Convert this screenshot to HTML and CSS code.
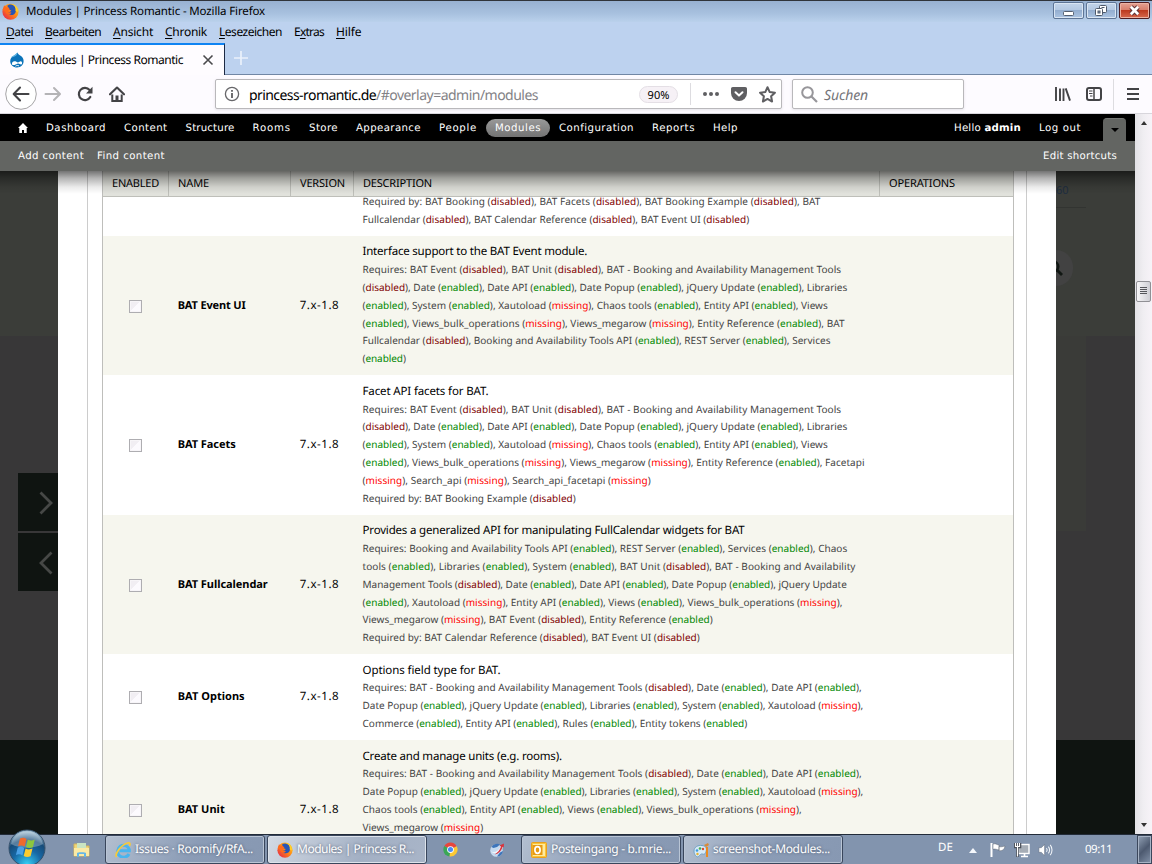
FILE: index.html
```html
<!DOCTYPE html>
<html lang="de">
<head>
<meta charset="utf-8">
<title>Modules | Princess Romantic</title>
<link rel="stylesheet" href="styles.css">
</head>
<body>
<svg width="0" height="0" class="defs">
  <defs>
    <linearGradient id="fox" x1="1" y1="0" x2="0" y2="1"><stop offset="0" stop-color="#ffe226"/><stop offset=".45" stop-color="#ff8a16"/><stop offset="1" stop-color="#e3184f"/></linearGradient>
    <radialGradient id="orb" cx=".5" cy=".95" r=".9"><stop offset="0" stop-color="#35d0f5"/><stop offset=".45" stop-color="#1768a5"/><stop offset=".75" stop-color="#174b78"/><stop offset="1" stop-color="#9fbdd0"/></radialGradient>
    <symbol id="firefox" viewBox="0 0 16 16">
      <circle cx="8" cy="8.200" r="7.600" fill="url(#fox)"/>
      <path d="M5 2.600C7 .8 11 1 12.600 4.200c1 2.200.6 5-1.200 6.300-2.200 1.500-5.600.8-6.200-1.500l2.200-.6 1.400-1.400-2.300-.8z" fill="#2755b5"/>
      <path d="M.6 6.500 2 2.200l1.600 1.700 2.300.2 1.500 1.700-1.700 1.400.3 1.500 3 .3-1.400 1.500c-2 .9-4.600-.8-4.700-2.900z" fill="#ff6a1c"/>
      <path d="M9 1.200c3 1 4.200 3 3.700 6.300l2.300 1C15.200 4.500 12.500 1.500 9 1.200z" fill="#ffd02a"/>
    </symbol>
  </defs>
</svg>
<div class="window">
  <header class="titlebar">
    <svg class="app" viewBox="0 0 16 16"><use href="#firefox"/></svg>
    <span data-w="239">Modules | Princess Romantic - Mozilla Firefox</span>
    <div class="winbtns">
      <button class="wb"><svg viewBox="0 0 31 17"><rect x="10.500" y="9.500" width="10" height="4" rx="1" fill="#fff" stroke="#555f70"/></svg></button>
      <button class="wb"><svg viewBox="0 0 31 17"><g fill="#fff" stroke="#4e5869"><rect x="13.500" y="3.500" width="7" height="7" rx="1"/><rect x="9.500" y="6.500" width="7" height="7" rx="1"/><rect x="12" y="9" width="2" height="2" fill="#8fa5c4"/><path d="M15.500 5.500h3"/></g></svg></button>
      <button class="wb close"><svg viewBox="0 0 31 17"><path d="M12 5l7 7M19 5l-7 7" stroke="#5d3034" stroke-width="4.600"/><path d="M11.800 4.800l7.400 7.400M19.200 4.800l-7.400 7.400" stroke="#fff" stroke-width="2.700"/></svg></button>
    </div>
  </header>
  <nav class="menubar">
    <span data-w="27"><u>D</u>atei</span><span data-w="56"><u>B</u>earbeiten</span><span data-w="40"><u>A</u>nsicht</span><span data-w="42"><u>C</u>hronik</span><span data-w="63"><u>L</u>esezeichen</span><span data-w="30">E<u>x</u>tras</span><span data-w="25.5"><u>H</u>ilfe</span>
  </nav>
  <div class="tabs">
    <div class="tab">
      <svg class="drop" viewBox="0 0 16 16"><path d="M8.300.5c.7 1.700 2 2.200 3.700 3.500 1.700 1.200 2.600 2.900 2.600 5.100 0 3.900-3 6.400-6.600 6.400S1.200 12.800 1.200 9.200c0-3 1.700-4.200 3.700-5.500C6.600 2.700 7.700 2 8.300.5z" fill="#0b73b9"/><path d="M1.800 5.500C3 4 6 3.400 8.300.5c.3 2.500-1.600 4.500-6.500 5z" fill="#5bb1e0"/><path d="M3 12.200c-.3-2 1.300-3.300 3.200-2.900 1.200.3 2 1.200 2.700 1.200s1.700-1.400 3-1.300c1.400.1 1.700 2.700.5 3.300-1 .5-2-.8-3.200-.9-1.400-.1-1.900 1.200-3.600 1.400-1.200.1-2.300.1-2.600-.8z" fill="#fff"/><path d="M6.500 14.200c1-.9 2.600-.9 3.500-.2" stroke="#fff" fill="none"/></svg>
      <span class="tabname" data-w="152">Modules | Princess Romantic</span>
      <svg class="x" viewBox="0 0 12 12"><path d="M1.500 1.500l9 9M10.500 1.500l-9 9" stroke="#4a4a4d" stroke-width="1.600"/></svg>
    </div>
    <svg class="plus" viewBox="0 0 14 14"><path d="M7 0v14M0 7h14" stroke="#eaf1fb" stroke-width="1.700"/></svg>
  </div>
  <div class="navbar">
    <span class="back"><svg viewBox="0 0 32 32"><circle cx="16" cy="16" r="15.300" fill="#fff" stroke="#a5a4a6"/><path d="M23.500 16H9M15 9.500L8.700 16l6.300 6.500" fill="none" stroke="#434346" stroke-width="2.100" stroke-linecap="round" stroke-linejoin="round"/></svg></span>
    <svg class="fwd" viewBox="0 0 18 16"><path d="M1.500 8h14M10 2l6 6-6 6" fill="none" stroke="#b4b3b6" stroke-width="2" stroke-linecap="round" stroke-linejoin="round"/></svg>
    <svg class="reload" viewBox="0 0 16 16"><path d="M13.300 11A6.100 6.100 0 1 1 12.600 4" fill="none" stroke="#434346" stroke-width="2.200" stroke-linecap="round"/><path d="M15.500.8v6.700H9z" fill="#434346"/></svg>
    <svg class="home" viewBox="0 0 16 16"><path d="M1 8.300L8 1.500l7 6.800" fill="none" stroke="#434346" stroke-width="2.100" stroke-linecap="round" stroke-linejoin="round"/><path d="M3.300 8.500V15h9.400V8.500" fill="none" stroke="#434346" stroke-width="2"/><path d="M6.500 15V9.500h3V15z" fill="#434346"/></svg>
    <div class="url">
      <svg class="info" viewBox="0 0 16 16"><circle cx="8" cy="8" r="6.600" fill="none" stroke="#67676a" stroke-width="1.300"/><path d="M8 7v5M8 4v1.800" stroke="#555558" stroke-width="1.700"/></svg>
      <span class="host" data-w="127">princess-romantic.de</span><span class="path" data-w="162">/#overlay=admin/modules</span>
      <span class="zoom"><span data-w="22">90%</span></span>
      <i class="usep"></i>
      <svg class="dots" viewBox="0 0 16 6"><g fill="#5f5f62"><circle cx="2" cy="3" r="2"/><circle cx="8" cy="3" r="2"/><circle cx="14" cy="3" r="2"/></g></svg>
      <svg class="pocket" viewBox="0 0 16 14"><path d="M1.800 0h12.400C15.300 0 16 .8 16 1.800V6a8 8 0 0 1-16 0V1.800C0 .8.700 0 1.800 0z" fill="#5f5f62"/><path d="M4.500 5.300L8 8.600l3.500-3.300" fill="none" stroke="#fff" stroke-width="2" stroke-linecap="round" stroke-linejoin="round"/></svg>
      <svg class="star" viewBox="0 0 16 16"><path d="M8 1.200l2.100 4.500 4.900.6-3.600 3.400.9 4.900L8 12.200l-4.300 2.400.9-4.900L1 6.300l4.900-.6z" fill="none" stroke="#5f5f62" stroke-width="1.900" stroke-linejoin="round"/></svg>
    </div>
    <div class="search">
      <svg viewBox="0 0 17 17"><circle cx="6.500" cy="6.500" r="5.300" fill="none" stroke="#97969a" stroke-width="2"/><path d="M10.500 10.500l5.500 5.500" stroke="#97969a" stroke-width="2.200"/></svg>
      <span data-w="44">Suchen</span>
    </div>
    <svg class="lib" viewBox="0 0 16 14"><path d="M1 0v14M5 1.500V14M8.500 1.500V14M10.700 1.400L15 13.600" stroke="#434346" stroke-width="1.900" fill="none"/></svg>
    <svg class="side" viewBox="0 0 16 14"><rect x="1" y="1" width="14" height="12" rx="2" fill="none" stroke="#434346" stroke-width="2"/><path d="M8 1v12" stroke="#434346" stroke-width="1.500"/><path d="M3 4h3.500M3 6.500h3.500M4 9h2.500" stroke="#434346"/></svg>
    <i class="nsep"></i>
    <svg class="burger" viewBox="0 0 12 12"><path d="M0 1h12M0 6h12M0 11h12" stroke="#434346" stroke-width="2"/></svg>
  </div>

  <div class="viewport">
    <div class="page">
      <div class="toolbar">
        <svg class="thome" viewBox="0 0 10 10"><path d="M5 0l5 5H8.700v5H6V7H4v3H1.300V5H0z" fill="#fff"/></svg>
        <a><span data-w="60">Dashboard</span></a><a><span data-w="43.5">Content</span></a><a><span data-w="49">Structure</span></a><a><span data-w="38.5">Rooms</span></a><a><span data-w="29">Store</span></a><a><span data-w="65">Appearance</span></a><a><span data-w="38">People</span></a><a class="active"><span data-w="46">Modules</span></a><a><span data-w="75">Configuration</span></a><a><span data-w="43">Reports</span></a><a><span data-w="25">Help</span></a>
        <div class="user"><a><span data-w="67">Hello <b>admin</b></span></a><a><span data-w="42">Log out</span></a><span class="toggle"><i></i></span></div>
      </div>
      <div class="shortcuts"><span data-w="66">Add content</span><span data-w="68">Find content</span><span class="edit" data-w="74">Edit shortcuts</span></div>
      <div class="main">
        <aside class="left">
          <div class="g1"></div><div class="g2">
            <span class="arrow"><svg viewBox="0 0 14 24"><path d="M1.500 1.500L12 12 1.500 22.500" fill="none" stroke="#464846" stroke-width="2.800"/></svg></span>
            <span class="arrow"><svg viewBox="0 0 14 24"><path d="M12.500 1.500L2 12l10.500 10.500" fill="none" stroke="#464846" stroke-width="2.800"/></svg></span>
          </div><div class="g3"></div>
        </aside>
        <section class="overlay">
          <div class="frame">
            <div class="table">
              <div class="row head"><span><em data-w="47">ENABLED</em></span><span><em data-w="31">NAME</em></span><span><em data-w="45">VERSION</em></span><span><em data-w="69">DESCRIPTION</em></span><span><em data-w="66">OPERATIONS</em></span></div>
              <div class="body" id="modules"></div>
            </div>
          </div>
        </section>
        <aside class="right">
          <div class="r1"><span class="num">60</span><i class="rule"></i><span class="lens"><svg viewBox="0 0 16 16"><circle cx="6.500" cy="6.500" r="4.800" fill="none" stroke="#111713" stroke-width="2.400"/><path d="M10 10l5 5" stroke="#111713" stroke-width="2.800"/></svg></span></div>
          <div class="r2"><i></i></div><div class="g3"></div>
        </aside>
        <div class="shade"></div>
      </div>
    </div>
    <div class="scroll"><i class="up"></i><span class="thumb"><i></i><i></i><i></i><i></i></span><i class="down"></i></div>
  </div>

  <footer class="taskbar">
    <svg class="orb" viewBox="0 0 38 38"><circle cx="19" cy="19" r="18" fill="url(#orb)" stroke="#35506a"/><path d="M3 15a16.500 16.500 0 0 1 32 0c-9 5-23 5-32 0z" fill="#fff" opacity=".28"/><path d="M12 9.500c2.500-1.300 4.500-.9 6.500.4l-1.800 7.600c-2-1.200-4-1.500-6.600-.4z" fill="#ee6a2c"/><path d="M19.800 10.500c2.200 1.200 4.200 1.300 7 0l-1.900 7.700c-2.600 1.100-4.700.9-6.900-.2z" fill="#8cc63f"/><path d="M9.800 18.500c2.600-1.100 4.500-.7 6.500.4l-1.900 7.500c-2-1.200-3.900-1.400-6.500-.4z" fill="#4aa0e6"/><path d="M17.600 19.500c2.200 1.200 4.300 1.200 6.900.1l-1.900 7.600c-2.600 1.100-4.700.9-6.900-.2z" fill="#fccb2f"/></svg>
    <svg class="folder" viewBox="0 0 17 16"><path d="M1 2h6l1.500 2H16v10H1z" fill="#f0d678" stroke="#d3b55c"/><path d="M4 1h9v5H4z" fill="#c9e4c2"/><path d="M1 6h15v8H1z" fill="#fbeaa4"/><path d="M4 15v-4c0-1 9-1 9 0v4h-2v-3H6v3z" fill="#65b7e6"/></svg>
    <div class="task"><svg viewBox="0 0 16 16"><path d="M14 12a6 6 0 1 1 .3-4.600v1.300H4.500" fill="none" stroke="#49b5ee" stroke-width="3"/><path d="M1.500 15C-.5 12 6 3 12.500 1c2.500-.7 3 .8 2 3" fill="none" stroke="#f7c93a" stroke-width="1.700"/></svg><span data-w="118">Issues · Roomify/RfA...</span></div>
    <div class="task on"><svg viewBox="0 0 16 16"><use href="#firefox"/></svg><span data-w="117">Modules | Princess R...</span></div>
    <svg class="chrome" viewBox="0 0 16 16"><path d="M8 8L1.400 4.200A7.500 7.500 0 0 1 14.600 4.500z" fill="#e8453c"/><path d="M8 8L1.400 4.200A7.500 7.500 0 0 0 7 15.500z" fill="#3aa757"/><path d="M8 8l6.600-3.500A7.500 7.500 0 0 1 7 15.500z" fill="#fcc934"/><circle cx="8" cy="8" r="3.600" fill="#fff"/><circle cx="8" cy="8" r="2.700" fill="#4a8af4"/></svg>
    <svg class="globe" viewBox="0 0 16 16"><circle cx="7.500" cy="8.500" r="6.300" fill="#c4daf0"/><path d="M2.500 5c2-3 6-4 8.500-2.500l-3 2.500-3.500 1zM8 14.500c3 0 5.500-2 6-5.500l-3 1.500z" fill="#3d75bb"/><path d="M1 8.500c3 3 8 2 11.500-5L14 5C12 11 5 13.500 1 8.500z" fill="#f3f6fb"/><path d="M5.500 12.500c3-1.500 5.500-4.500 6.500-8L10.500 3.500l4.500-2-.3 4-1-.8c-1.400 4.500-4 7-8.200 7.800z" fill="#d8343d"/></svg>
    <div class="task mail"><svg viewBox="0 0 16 16"><rect x=".5" y=".5" width="15" height="15" rx="1" fill="#fbc53a" stroke="#e9a01c"/><rect x="2" y="2" width="12" height="12" fill="#ffeb9c"/><rect x="1.500" y="3" width="10" height="10" fill="#e79a12"/><ellipse cx="6.500" cy="8" rx="2.600" ry="3.300" fill="none" stroke="#fff" stroke-width="1.700"/></svg><span data-w="120">Posteingang - b.mrie...</span></div>
    <div class="task"><svg viewBox="0 0 16 16"><path d="M1 9c0-4 4-6 8-5.500s5 3 4 6-2 3-3.500 2.500S7 13 5.500 14.500 1 13 1 9z" fill="#d7eaf6" stroke="#6fa0c4"/><circle cx="4" cy="8.500" r="1.300" fill="#3f9de0"/><circle cx="7" cy="6.500" r="1.300" fill="#4bae4f"/><circle cx="10" cy="7" r="1.200" fill="#d84a3a"/><circle cx="4.500" cy="12" r="1.200" fill="#e7b22f"/><path d="M14 5v10" stroke="#ea8b1e" stroke-width="2"/><path d="M11 3l4-2 1 2-3 2z" fill="#d78a3a"/></svg><span data-w="117">screenshot-Modules...</span></div>
    <div class="tray">
      <span class="de" data-w="15">DE</span>
      <i class="tri"></i>
      <svg class="flag" viewBox="0 0 16 16"><path d="M1.500 1v14" stroke="#fff" stroke-width="2"/><path d="M3 2c3-1 4 1 6 1v5c-2 0-3-1.500-6-.7zM9 4.500c2 .7 4 0 6-.5-.5 3-2 5-6 4.700z" fill="#fff" stroke="#5c6470" stroke-width=".5"/></svg>
      <svg class="net" viewBox="0 0 16 16"><rect x="4.500" y="2.500" width="10.500" height="9" fill="#a6adb6" stroke="#fff" stroke-width="1.400"/><path d="M7 14.500h7M10.500 12v2" stroke="#fff" stroke-width="1.600"/><path d="M1 1v4h5V1M3.500 1v14" fill="none" stroke="#4a4f58" stroke-width="2.600"/><path d="M1.500 1v3.500h4V1M3.500 1v13.500" fill="none" stroke="#fff" stroke-width="1.100"/></svg>
      <svg class="vol" viewBox="0 0 16 16"><path d="M1 5.500h2.500L7 2v12l-3.500-3.500H1z" fill="#fff" stroke="#606a78" stroke-width=".5"/><path d="M9 6c1 1.200 1 2.800 0 4M11 4.300c1.800 2 1.800 5.400 0 7.400M13 2.500c2.600 3 2.600 8 0 11" fill="none" stroke="#f3f6fa" stroke-width="1.100"/></svg>
      <span class="clock" data-w="27">09:11</span>
      <i class="peek"></i>
    </div>
  </footer>
</div>
<script src="script.js"></script>
</body>
</html>
```
FILE: styles.css
```css
* { box-sizing: border-box; }
body { margin: 0; font-family: "Noto Sans", "Open Sans", sans-serif; font-size: 12px; color: #000; text-rendering: geometricPrecision; }
svg { display: block; flex: none; }
.defs { position: absolute; }
span, em { white-space: nowrap; font-style: normal; }
i { display: block; flex: none; }
.window { width: 1152px; height: 864px; overflow: hidden; display: flex; flex-direction: column; background: #bdd2ef; }

.titlebar { height: 22px; flex: none; display: flex; align-items: center; border-top: 1px solid #30343a; background: linear-gradient(#98b1d1, #a8c1df 60%, #bad1ec); padding: 0 2px; font-size: 11.5px; }
.titlebar .app { width: 17px; height: 17px; margin-right: 7px; }
.winbtns { margin-left: auto; display: flex; gap: 2px; align-self: flex-start; padding-top: 1px; }
.wb { width: 31px; height: 17px; padding: 0; border: 1px solid #5e7596; border-radius: 2px; background: linear-gradient(#c3d4ea, #b3c8e2 48%, #94aed0 50%, #acc4e2); box-shadow: inset 0 0 0 1px #d9e5f3; }
.wb svg { width: 31px; height: 17px; margin: -1px; }
.wb.close { border-color: #4f1d22; background: linear-gradient(#e4a193, #d77c69 48%, #bd3a20 50%, #d7694e); box-shadow: inset 0 0 0 1px #ecb1a2; }

.menubar { height: 21px; flex: none; display: flex; gap: 12px; padding: 0 6px; line-height: 20px; }
.menubar u { text-underline-offset: 2px; }

.tabs { height: 32px; flex: none; display: flex; border-bottom: 1px solid #7187a5; }
.tab { width: 225px; height: 32px; background: #fefcff; border-top: 2px solid #0f84f3; border-right: 1px solid #1d2a44; display: flex; align-items: center; padding: 0 10px 0 9px; }
.tabname { padding-bottom: 1px; }
.drop { width: 16px; height: 16px; margin-right: 6px; }
.x { width: 12px; height: 12px; margin-left: auto; }
.plus { width: 14px; height: 14px; margin: 8px 0 0 9px; }

.navbar { height: 39px; flex: none; background: #fdfbff; border-bottom: 1px solid #d8d6dc; display: flex; align-items: center; padding-left: 5px; }
.back svg { width: 32px; height: 32px; }
.fwd { width: 18px; height: 16px; margin-left: 7px; }
.reload { width: 16px; height: 16px; margin-left: 15px; }
.home { width: 16px; height: 16px; margin-left: 16px; }
.url { width: 567px; height: 30px; margin-left: 90px; border: 1px solid #b9b8bb; border-radius: 2px; background: #fff; display: flex; align-items: center; padding-left: 8px; box-shadow: 0 1px 3px #e4e2e8; }
.info { width: 16px; height: 16px; margin-right: 9px; }
.host, .path { font-size: 14px; padding-top: 2px; }
.path { color: #838286; }
.zoom { margin-left: 101px; width: 39px; height: 17px; border: 1px solid #e4dfe5; border-radius: 9px; background: #f6f1f6; font-size: 11px; line-height: 17px; text-align: center; }
.usep { width: 1px; height: 22px; background: #dddce0; margin-left: 12px; }
.dots { width: 16px; height: 6px; margin-left: 12px; }
.pocket { width: 16px; height: 14px; margin-left: 12px; }
.star { width: 17px; height: 17px; margin-left: 12px; }
.search { width: 172px; height: 30px; margin-left: 10px; border: 1px solid #b9b8bb; border-radius: 2px; background: #fff; display: flex; align-items: center; padding-left: 8px; box-shadow: 0 1px 3px #e4e2e8; }
.search svg { width: 17px; height: 17px; margin-right: 6px; }
.search span { font-size: 14px; font-style: italic; color: #757478; padding-top: 2px; }
.lib { width: 16px; height: 14px; margin-left: 91px; }
.side { width: 16px; height: 14px; margin-left: 15px; }
.nsep { width: 1px; height: 31px; background: #dddce0; margin-left: 11px; }
.burger { width: 12px; height: 12px; margin-left: 13px; }

.viewport { height: 720px; flex: none; display: flex; overflow: hidden; }
.page { width: 1135px; display: flex; flex-direction: column; }
.toolbar { height: 27px; flex: none; background: #000; color: #fff; display: flex; align-items: center; padding-left: 18px; font: 10.2px "DejaVu Sans", sans-serif; }
.toolbar a { padding: 0 9px; height: 18px; line-height: 20px; border-radius: 9px; }
.toolbar .active { background: linear-gradient(#999, #737373); }
.thome { width: 10px; height: 10px; margin-right: 9px; }
.user { margin-left: auto; display: flex; align-self: flex-end; align-items: center; }
.user a { margin-top: -4px; }
.toggle { width: 23px; height: 23px; margin: 0 9px 0 13px; background: #636562; border-top: 1px solid #767876; border-radius: 4px 4px 0 0; display: flex; align-items: center; justify-content: center; }
.toggle i { border: 4px solid transparent; border-top-color: #000; border-bottom: 0; }
.shortcuts { height: 30px; flex: none; background: #636562; color: #fff; display: flex; gap: 13px; padding: 0 18px; font: 10.2px/32px "DejaVu Sans", sans-serif; }
.shortcuts .edit { margin-left: auto; }
.main { position: relative; flex: 1; display: flex; min-height: 0; }
.shade { position: absolute; inset: 0 0 auto 0; height: 23px; background: linear-gradient(rgba(0,0,0,.55), rgba(0,0,0,.3) 30%, rgba(0,0,0,.08) 70%, transparent); }
.left { width: 58px; display: flex; flex-direction: column; }
.g1 { height: 165px; background: #3b3d39; }
.g2 { height: 404px; background: #383738; display: flex; flex-direction: column; gap: 2px; padding: 137px 0 0 18px; }
.g3 { flex: 1; background: #0f1411; }
.arrow { height: 58px; background: #0f1411; padding: 18px 0 0 21px; }
.arrow svg { width: 14px; height: 24px; }
.overlay { width: 998px; background: #fff; padding: 0 29px; display: flex; }
.frame { width: 940px; border: solid #ccc; border-width: 0 1px; padding: 0 12px 0 14px; display: flex; }
.table { width: 912px; border: solid #bebebb; border-width: 0 1px; display: flex; flex-direction: column; }
.row { display: grid; grid-template-columns: 66px 122px 63px 526px 1fr; flex: none; }
.head { height: 26px; background: #e1e2dc; border-bottom: 1px solid #bebfb9; font-size: 11px; line-height: 26px; }
.head span { padding-left: 9px; border-right: 1px solid #bebfb9; }
.head span:last-child { border: 0; }
.body { flex: 1; min-height: 0; display: flex; flex-direction: column; }
.body .row { align-items: center; padding: 7.200px 0 7.400px; line-height: 17.850px; }
.body .row.cut { height: 39px; align-items: start; padding: 0; }
.row.cut .desc { margin-top: -4px; }
.row.odd { background: #f6f6ee; }
.check { width: 13px; height: 13px; margin-left: 26px; margin-top: 1px; border: 1px solid #aeadb1; background: linear-gradient(135deg, #f1eef3 45%, #fcfafe 50%); box-shadow: inset 0 0 0 1px #f7f5f8; }
.name { padding-left: 8.700px; font-weight: 700; font-size: 11px; }
.version { padding-left: 8.700px; font-size: 11.500px; }
.desc { padding-left: 8.500px; font-size: 10px; color: #444; }
.row:last-child .desc { min-height: 125px; }
.desc div { height: 17.850px; }
.desc .title { font-size: 11.500px; color: #000; }
.enabled { color: #080; }
.disabled { color: #800000; }
.missing { color: #f00; }
.right { width: 79px; display: flex; flex-direction: column; }
.r1 { height: 165px; background: #3b3d39; display: flex; flex-direction: column; }
.num { height: 36px; line-height: 39px; font-size: 11px; color: #1e2d40; }
.rule { width: 30px; height: 1px; background: #323431; }
.lens { width: 17px; height: 36px; margin-top: 42px; background: #424242; border-radius: 0 18px 18px 0; overflow: hidden; display: flex; align-items: center; justify-content: flex-end; padding-right: 10px; }
.lens svg { width: 16px; height: 16px; }
.r2 { height: 404px; background: #383738; }
.r2 i { width: 30px; height: 195px; background: #3a3b38; }
.scroll { width: 17px; background: linear-gradient(90deg, #e3e2e6, #f0eef2 50%, #f7f3f8); display: flex; flex-direction: column; align-items: center; padding: 7px 1px 7px; }
.up { border: 3.500px solid transparent; border-bottom: 4px solid #333; border-top: 0; }
.down { margin-top: auto; border: 3.500px solid transparent; border-top: 4px solid #333; border-bottom: 0; }
.thumb { width: 15px; height: 21px; margin-top: 156px; border: 1px solid #909095; border-radius: 2px; background: linear-gradient(90deg, #f6f5f7, #cfcfd5); display: flex; flex-direction: column; gap: 1px; align-items: center; padding-top: 5px; }
.thumb i { width: 7px; height: 1px; background: #55565b; }

.taskbar { height: 30px; flex: none; background: #8294ae; border-top: 1px solid #222b38; display: flex; align-items: center; position: relative; color: #fff; }
.orb { position: absolute; left: 8px; top: -6px; width: 38px; height: 38px; }
.folder { width: 17px; height: 16px; margin: 0 15px 0 73px; }
.task { width: 160px; height: 29px; margin-right: 2px; border: 1px solid #39465c; border-radius: 3px; background: linear-gradient(120deg, #b3bfd0, #8b9cb6 55%, #8798b2); box-shadow: inset 0 0 0 1px #b9c5d5; display: flex; align-items: center; gap: 4px; padding-left: 9px; text-shadow: 0 0 3px #46546a; font-size: 12px; }
.task.on { background: linear-gradient(120deg, #d3dae4, #a3b0c4 60%, #a9b5c8); box-shadow: inset 0 0 0 1px #dde3eb; }
.task svg { width: 16px; height: 16px; }
.task span { margin-top: -2px; }
.chrome { width: 15px; height: 15px; margin-left: 14px; }
.globe { width: 16px; height: 16px; margin: 0 16px 0 31px; }
.tray { margin-left: auto; display: flex; align-items: center; align-self: stretch; }
.de { margin-top: -5px; font-size: 11.500px; }
.tri { margin: 2px 0 0 16px; border: 4px solid transparent; border-bottom: 5px solid #f5f8fc; border-top: 0; }
.flag { width: 16px; height: 16px; margin-left: 13px; }
.net { width: 16px; height: 16px; margin-left: 8px; }
.vol { width: 15px; height: 16px; margin-left: 8px; }
.clock { margin-left: 32px; font-size: 11.500px; }
.peek { align-self: stretch; width: 15px; margin-left: 25px; border: 1px solid #3b475c; background: linear-gradient(135deg, #93a1b5, #4d5a70 50%, #8493aa); box-shadow: inset 0 0 0 1px #a6b2c4; }
```
FILE: script.js
```javascript
// Each module: name, then [text, width] for the title and every description line.
const modules = [
  { cut: true, lines: [
    ["Required by: BAT Booking (disabled), BAT Facets (disabled), BAT Booking Example (disabled), BAT", 458],
    ["Fullcalendar (disabled), BAT Calendar Reference (disabled), BAT Event UI (disabled)", 386.7]] },
  { name: ["BAT Event UI", 68], title: ["Interface support to the BAT Event module.", 224.7], lines: [
    ["Requires: BAT Event (disabled), BAT Unit (disabled), BAT - Booking and Availability Management Tools", 478.7],
    ["(disabled), Date (enabled), Date API (enabled), Date Popup (enabled), jQuery Update (enabled), Libraries", 484.7],
    ["(enabled), System (enabled), Xautoload (missing), Chaos tools (enabled), Entity API (enabled), Views", 465.3],
    ["(enabled), Views_bulk_operations (missing), Views_megarow (missing), Entity Reference (enabled), BAT", 482],
    ["Fullcalendar (disabled), Booking and Availability Tools API (enabled), REST Server (enabled), Services", 468],
    ["(enabled)", 43.3]] },
  { name: ["BAT Facets", 58], title: ["Facet API facets for BAT.", 126], lines: [
    ["Requires: BAT Event (disabled), BAT Unit (disabled), BAT - Booking and Availability Management Tools", 478.7],
    ["(disabled), Date (enabled), Date API (enabled), Date Popup (enabled), jQuery Update (enabled), Libraries", 484.7],
    ["(enabled), System (enabled), Xautoload (missing), Chaos tools (enabled), Entity API (enabled), Views", 465.3],
    ["(enabled), Views_bulk_operations (missing), Views_megarow (missing), Entity Reference (enabled), Facetapi", 502],
    ["(missing), Search_api (missing), Search_api_facetapi (missing)", 288.3],
    ["Required by: BAT Booking Example (disabled)", 213.3]] },
  { name: ["BAT Fullcalendar", 90], title: ["Provides a generalized API for manipulating FullCalendar widgets for BAT", 382], lines: [
    ["Requires: Booking and Availability Tools API (enabled), REST Server (enabled), Services (enabled), Chaos", 484.7],
    ["tools (enabled), Libraries (enabled), System (enabled), BAT Unit (disabled), BAT - Booking and Availability", 493],
    ["Management Tools (disabled), Date (enabled), Date API (enabled), Date Popup (enabled), jQuery Update", 484.3],
    ["(enabled), Xautoload (missing), Entity API (enabled), Views (enabled), Views_bulk_operations (missing),", 480],
    ["Views_megarow (missing), BAT Event (disabled), Entity Reference (enabled)", 350.3],
    ["Required by: BAT Calendar Reference (disabled), BAT Event UI (disabled)", 337.3]] },
  { name: ["BAT Options", 67], title: ["Options field type for BAT.", 138], lines: [
    ["Requires: BAT - Booking and Availability Management Tools (disabled), Date (enabled), Date API (enabled),", 499.3],
    ["Date Popup (enabled), jQuery Update (enabled), Libraries (enabled), System (enabled), Xautoload (missing),", 500.7],
    ["Commerce (enabled), Entity API (enabled), Rules (enabled), Entity tokens (enabled)", 384.7]] },
  { name: ["BAT Unit", 47], title: ["Create and manage units (e.g. rooms).", 199.3], lines: [
    ["Requires: BAT - Booking and Availability Management Tools (disabled), Date (enabled), Date API (enabled),", 499.3],
    ["Date Popup (enabled), jQuery Update (enabled), Libraries (enabled), System (enabled), Xautoload (missing),", 500.7],
    ["Chaos tools (enabled), Entity API (enabled), Views (enabled), Views_bulk_operations (missing),", 439.3],
    ["Views_megarow (missing)", 120.7]] },
];

const label = ([text, width]) => `<span data-w="${width}">${text.replace(/\((enabled|disabled|missing)\)/g, '(<span class="$1">$1</span>)')}</span>`;

document.getElementById("modules").innerHTML = modules.map((m, i) => {
  const lines = m.lines.map(l => `<div>${label(l)}</div>`).join("");
  if (m.cut) return `<div class="row cut"><i></i><i></i><i></i><div class="desc">${lines}</div></div>`;
  return `<div class="row ${i % 2 ? "odd" : ""}"><span class="check"></span><div class="name">${label(m.name)}</div>` +
    `<div class="version">${label(["7.x-1.8", 39.5])}</div><div class="desc"><div class="title">${label(m.title)}</div>${lines}</div></div>`;
}).join("");

// Track each label so that it fills its given width.
document.querySelectorAll("[data-w]").forEach(el => {
  const gap = el.dataset.w - el.getBoundingClientRect().width;
  el.style.letterSpacing = gap / el.textContent.length + "px";
});
```
